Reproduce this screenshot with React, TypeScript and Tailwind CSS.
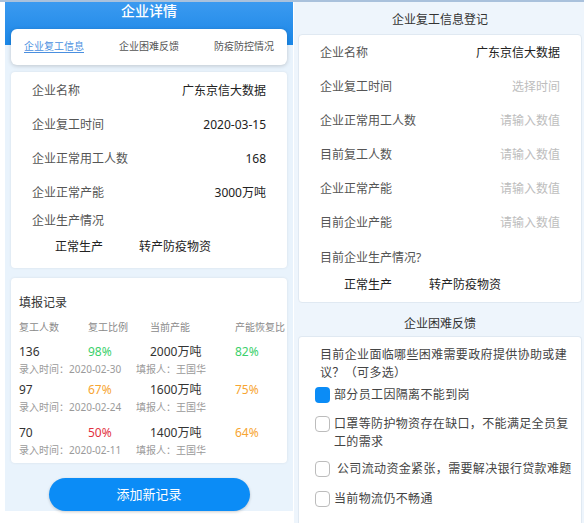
const font = { fontFamily: '"Noto Sans", "Noto Sans CJK SC", sans-serif' };

const infoRows = [
  { label: "企业名称", value: "广东京信大数据" },
  { label: "企业复工时间", value: "2020-03-15" },
  { label: "企业正常用工人数", value: "168" },
  { label: "企业正常产能", value: "3000万吨" },
];

const records = [
  { n: "136", ratio: "98%", ratioColor: "text-[#3cd06c]", cap: "2000万吨", rec: "82%", recColor: "text-[#3cd06c]", date: "2020-02-30", mt: "mt-[6px]" },
  { n: "97", ratio: "67%", ratioColor: "text-[#f7a532]", cap: "1600万吨", rec: "75%", recColor: "text-[#f7a532]", date: "2020-02-24", mt: "mt-[2px]" },
  { n: "70", ratio: "50%", ratioColor: "text-[#e2323f]", cap: "1400万吨", rec: "64%", recColor: "text-[#f7a532]", date: "2020-02-11", mt: "mt-[7px]" },
];

const formRows = [
  { label: "企业名称", value: "广东京信大数据", filled: true },
  { label: "企业复工时间", value: "选择时间" },
  { label: "企业正常用工人数", value: "请输入数值" },
  { label: "目前复工人数", value: "请输入数值" },
  { label: "企业正常产能", value: "请输入数值" },
  { label: "目前企业产能", value: "请输入数值" },
];

const problems = [
  { text: "部分员工因隔离不能到岗", checked: true, mt: "mt-[4px]" },
  { text: "口罩等防护物资存在缺口，不能满足全员复工的需求", mt: "mt-[11px]" },
  { text: "公司流动资金紧张，需要解决银行贷款难题", mt: "mt-[9px]", gap: "ml-[7px]" },
  { text: "当前物流仍不畅通", mt: "mt-[12px]" },
];

function DetailPanel() {
  return (
    <div className="ml-[5px] flex h-[509px] w-[288px] flex-col bg-[#e9f3fc]">
      <div className="h-[41px] bg-gradient-to-b from-[#3a9af0] to-[#1a87e7] text-center text-[14px] font-medium leading-[18px] text-white">
        企业详情
      </div>
      <div className="h-[2px] bg-[#1a87e7]" />
      <div className="relative mx-[6px] -mt-[16px] flex h-[36px] items-center justify-between rounded-[6px] bg-white px-[13px] text-[10px] text-[#555] shadow-[0_1px_4px_rgba(0,0,0,0.18)]">
        <span className="text-[#4a8fe0] underline underline-offset-2">企业复工信息</span>
        <span>企业困难反馈</span>
        <span>防疫防控情况</span>
      </div>

      <div className="mx-[6px] mt-[7px] rounded-[4px] bg-white px-[21px] pb-[6px] pt-[2px] text-[12px] shadow-[0_0_3px_rgba(0,0,0,0.08)]">
        {infoRows.map((r) => (
          <div key={r.label} className="flex h-[34px] items-center justify-between">
            <span className="text-[#555]">{r.label}</span>
            <span className="text-[#222]">{r.value}</span>
          </div>
        ))}
        <div className="flex h-[22px] items-center text-[#555]">企业生产情况</div>
        <div className="flex h-[30px] items-center text-[#222]">
          <span className="ml-[23px]">正常生产</span>
          <span className="ml-[36px]">转产防疫物资</span>
        </div>
      </div>

      <div className="mx-[6px] mt-[10px] h-[186px] rounded-[4px] bg-white pl-[8px] pt-[16px] shadow-[0_0_3px_rgba(0,0,0,0.08)]">
        <div className="text-[12px] leading-[18px] text-[#333]">填报记录</div>
        <div className="mt-[8px] grid h-[16px] grid-cols-[69px_62px_85px_1fr] items-center text-[10px] text-[#8a8a8a]">
          <span>复工人数</span>
          <span>复工比例</span>
          <span>当前产能</span>
          <span>产能恢复比</span>
        </div>
        {records.map((r) => (
          <div key={r.n} className={r.mt}>
            <div className="grid h-[20px] grid-cols-[69px_62px_85px_1fr] items-center text-[12px]">
              <span className="text-[#333]">{r.n}</span>
              <span className={r.ratioColor}>{r.ratio}</span>
              <span className="text-[#333]">{r.cap}</span>
              <span className={r.recColor}>{r.rec}</span>
            </div>
            <div className="flex h-[16px] items-center text-[10px] text-[#9a9a9a]">
              <span className="w-[117px]">录入时间：{r.date}</span>
              <span>填报人：王国华</span>
            </div>
          </div>
        ))}
      </div>

      <button className="mx-auto mt-[15px] h-[33px] w-[201px] rounded-full bg-[#0b8cf6] text-[13px] text-white shadow-[0_1px_3px_rgba(0,0,0,0.2)]">
        添加新记录
      </button>
    </div>
  );
}

function FormPanel() {
  return (
    <div className="ml-[1px] flex h-[521px] flex-1 flex-col bg-[#eef5fc] pl-[4px] pr-[2px]">
      <div className="flex h-[32px] items-center justify-center pt-[4px] text-[12px] text-[#333]">企业复工信息登记</div>
      <div className="rounded-[4px] border border-[#e0e9f2] bg-white px-[21px] pb-[8px] pt-[1px] text-[12px]">
        {formRows.map((r) => (
          <div key={r.label} className="flex h-[34px] items-center justify-between">
            <span className="text-[#555]">{r.label}</span>
            <span className={r.filled ? "text-[#222]" : "text-[#bdbdbd]"}>{r.value}</span>
          </div>
        ))}
        <div className="flex h-[36px] items-center text-[#555]">目前企业生产情况?</div>
        <div className="flex h-[18px] items-center text-[#222]">
          <span className="ml-[24px]">正常生产</span>
          <span className="ml-[37px]">转产防疫物资</span>
        </div>
      </div>
      <div className="flex h-[33px] items-center justify-center pt-[8px] text-[12px] text-[#333]">企业困难反馈</div>
      <div className="flex-1 rounded-t-[4px] border border-b-0 border-[#e0e9f2] bg-white pl-[16px] pr-[6px] pt-[9px] text-[12px] leading-[18px] tracking-[0.35px] text-[#444]">
        <div className="pl-[5px] pr-[4px]">目前企业面临哪些困难需要政府提供协助或建议？（可多选）</div>
        {problems.map((p) => (
          <div key={p.text} className={`flex items-start ${p.mt}`}>
            <span
              className={`mt-[1px] h-[16px] w-[15px] shrink-0 rounded-[4px] ${
                p.checked ? "bg-[#0b8cf6]" : "border border-[#bcbcbc] bg-white"
              }`}
            />
            <span className={p.gap ?? "ml-[4px]"}>{p.text}</span>
          </div>
        ))}
      </div>
    </div>
  );
}

export default function App() {
  return (
    <div style={font} className="h-[523px] w-[584px] overflow-hidden bg-white">
      <div className="h-[2px] bg-[#a9c1dc]" />
      <div className="flex">
        <DetailPanel />
        <FormPanel />
      </div>
    </div>
  );
}
